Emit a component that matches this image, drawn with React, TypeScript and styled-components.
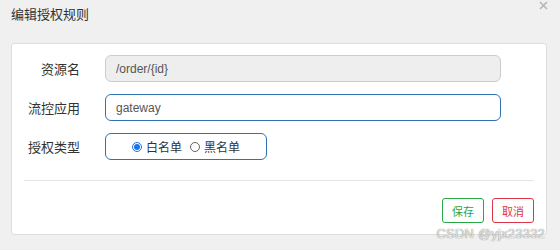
import React from 'react';
import styled, { createGlobalStyle } from 'styled-components';

const GlobalStyle = createGlobalStyle`
    html, body {
        margin: 0;
        padding: 0;
        background: #f0f0f0;
        font-family: "Liberation Sans", "Noto Sans CJK SC", Arial, sans-serif;
    }
`;

const Dialog = styled.div`
    position: relative;
    width: 560px;
    height: 250px;
    box-sizing: border-box;
    padding: 7px 13px 0 11px;
    background: #f0f0f0;
`;

const Title = styled.div`
    font-size: 13px;
    line-height: 16px;
    color: #333;
    font-weight: 400;
    height: 36px;
`;

const Close = styled.svg`
    position: absolute;
    top: 1px;
    right: 12px;
`;

const Card = styled.div`
    background: #fff;
    border: 1px solid #ddd;
    border-radius: 3px;
    height: 192px;
    box-sizing: border-box;
    padding: 11px 12px 0 12px;
    display: flex;
    flex-direction: column;
`;

const Form = styled.div`
    display: flex;
    flex-direction: column;
    gap: 12px;
`;

const Row = styled.div`
    display: flex;
    align-items: center;
    gap: 25px;
`;

const Label = styled.div`
    width: 56px;
    text-align: right;
    font-size: 13px;
    color: #333;
`;

const Input = styled.div<{ $disabled?: boolean }>`
    width: 396px;
    height: 27px;
    box-sizing: border-box;
    border: 1px solid ${(p) => (p.$disabled ? '#ccc' : '#2f71b3')};
    background: ${(p) => (p.$disabled ? '#eee' : '#fff')};
    border-radius: 6px;
    padding-left: 10px;
    display: flex;
    align-items: center;
    font-size: 12px;
    color: #555;
`;

const RadioBox = styled.div`
    width: 162px;
    height: 27px;
    box-sizing: border-box;
    border: 1px solid #2f71b3;
    border-radius: 6px;
    display: flex;
    align-items: center;
    padding-left: 26px;
    gap: 8px;
    font-size: 12px;
    color: #333;
`;

const RadioItem = styled.label`
    display: flex;
    align-items: center;
    gap: 4px;
`;

const Dot = styled.span<{ $checked?: boolean }>`
    width: 10px;
    height: 10px;
    border-radius: 50%;
    box-sizing: border-box;
    border: 1px solid ${(p) => (p.$checked ? '#1a73e8' : '#666')};
    display: flex;
    align-items: center;
    justify-content: center;
    &::after {
        content: '';
        width: 6px;
        height: 6px;
        border-radius: 50%;
        background: ${(p) => (p.$checked ? '#1a73e8' : 'transparent')};
    }
`;

const Divider = styled.div`
    height: 1px;
    background: #e5e5e5;
    margin: 20px 0 0 0;
`;

const Footer = styled.div`
    display: flex;
    justify-content: flex-end;
    gap: 8px;
    margin-top: 17px;
`;

const Button = styled.div<{ $color: string }>`
    width: 42px;
    height: 25px;
    box-sizing: border-box;
    border: 1px solid ${(p) => p.$color};
    color: ${(p) => p.$color};
    border-radius: 3px;
    display: flex;
    align-items: center;
    justify-content: center;
    font-size: 11px;
    background: #fff;
`;

const Watermark = styled.span`
    position: absolute;
    right: 15px;
    bottom: 9px;
    font-size: 13px;
    color: #e8e8e8;
    letter-spacing: 0.2px;
    text-shadow: 0 0 1px #555;
`;

export default function App() {
    return (
        <>
            <GlobalStyle />
            <Dialog>
                <Title>编辑授权规则</Title>
                <Close width="9" height="9" viewBox="0 0 9 9">
                    <path d="M1 1L8 8M8 1L1 8" stroke="#b5b5b5" strokeWidth="1.6" />
                </Close>
                <Card>
                    <Form>
                        <Row>
                            <Label>资源名</Label>
                            <Input $disabled>/order/{'{id}'}</Input>
                        </Row>
                        <Row>
                            <Label>流控应用</Label>
                            <Input>gateway</Input>
                        </Row>
                        <Row>
                            <Label>授权类型</Label>
                            <RadioBox>
                                <RadioItem>
                                    <Dot $checked />
                                    白名单
                                </RadioItem>
                                <RadioItem>
                                    <Dot />
                                    黑名单
                                </RadioItem>
                            </RadioBox>
                        </Row>
                    </Form>
                    <Divider />
                    <Footer>
                        <Button $color="#28a745">保存</Button>
                        <Button $color="#dc3545">取消</Button>
                    </Footer>
                </Card>
                <Watermark>CSDN @yjx23332</Watermark>
            </Dialog>
        </>
    );
}
